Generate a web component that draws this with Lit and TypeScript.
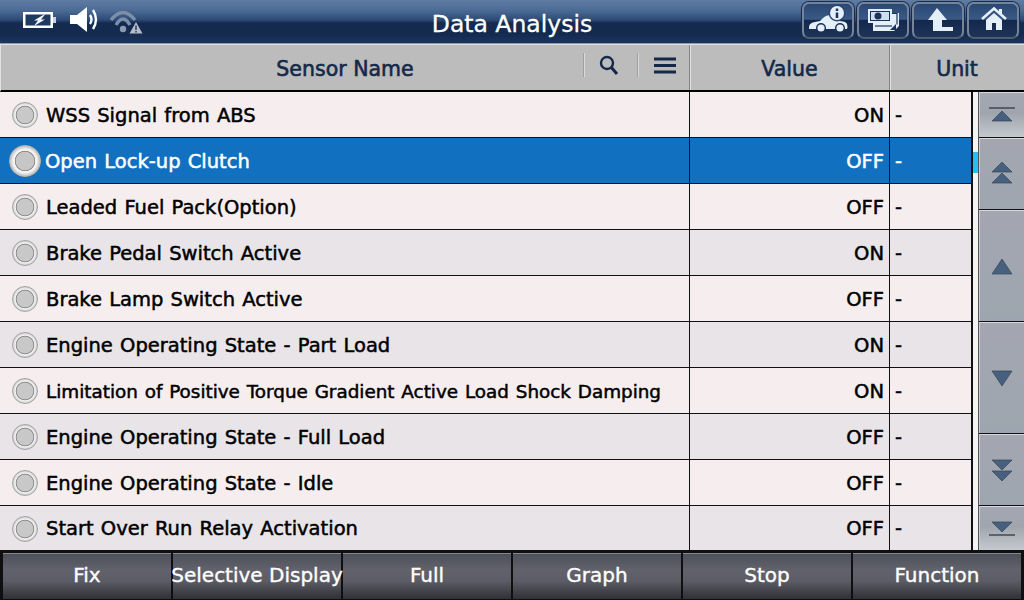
import { LitElement, html, css, svg } from "lit";
import { customElement } from "lit/decorators.js";

type Row = { name: string; value: string; alt?: boolean; selected?: boolean; tight?: boolean };

const rows: Row[] = [
  { name: "WSS Signal from ABS", value: "ON" },
  { name: "Open Lock-up Clutch", value: "OFF", selected: true },
  { name: "Leaded Fuel Pack(Option)", value: "OFF" },
  { name: "Brake Pedal Switch Active", value: "ON", alt: true },
  { name: "Brake Lamp Switch Active", value: "OFF" },
  { name: "Engine Operating State - Part Load", value: "ON", alt: true },
  { name: "Limitation of Positive Torque Gradient Active Load Shock Damping", value: "ON", tight: true },
  { name: "Engine Operating State - Full Load", value: "OFF", alt: true },
  { name: "Engine Operating State - Idle", value: "OFF" },
  { name: "Start Over Run Relay Activation", value: "OFF", alt: true },
];

const footer = ["Fix", "Selective Display", "Full", "Graph", "Stop", "Function"];

// triangle with its base on y, pointing up or down
const tri = (y: number, h: number, up: boolean) => svg`
  <path d="M3 ${y}l10 ${up ? -h : h}l10 ${up ? h : -h}z" fill="#47607f" stroke="#3b4350" stroke-width=".7"/>`;

const scrollButtons = [
  { cls: "b1", h: 16, icon: svg`<path d="M0 1h26" stroke="#38404e" stroke-width="1.4"/>${tri(14, 10, true)}` },
  { cls: "b2 up", h: 23, icon: svg`${tri(11, 10, true)}${tri(22, 10, true)}` },
  { cls: "b3", h: 17, icon: svg`${tri(16, 15, true)}` },
  { cls: "b3", h: 17, icon: svg`${tri(1, 15, false)}` },
  { cls: "b2", h: 23, icon: svg`${tri(1, 10, false)}${tri(12, 10, false)}` },
  { cls: "b1", h: 16, icon: svg`${tri(1, 10, false)}<path d="M0 14h26" stroke="#38404e" stroke-width="1.4"/>` },
];

@customElement("app-root")
export class AppRoot extends LitElement {
  static styles = css`
    :host {
      display: flex;
      flex-direction: column;
      width: 1024px;
      height: 600px;
      overflow: hidden;
      background: #000;
      font-family: "DejaVu Sans", sans-serif;
    }
    .topbar {
      height: 44px;
      flex: none;
      display: grid;
      grid-template-columns: 1fr 1fr 1fr;
      align-items: center;
      box-sizing: border-box;
      border-bottom: 1px solid #8d99ab;
      background: linear-gradient(#5f7da3 0, #4c6c96 10px, #2c4a75 20px, #142a4e 23px, #142a4e 34px, #1c3560 43px);
    }
    .status {
      display: flex;
      align-items: center;
      padding: 0 0 4px 23px;
    }
    .status .speaker {
      margin-left: 13px;
    }
    .status .wifi {
      margin: 5px 0 0 12px;
    }
    .title {
      justify-self: center;
      color: #fff;
      font-size: 23.5px;
      -webkit-text-stroke: 0.3px #fff;
      padding-top: 4px;
      white-space: nowrap;
    }
    .tools {
      display: flex;
      justify-content: flex-end;
      gap: 3px;
      padding: 0 5px 3px 0;
    }
    .tool {
      width: 52px;
      height: 37px;
      box-sizing: border-box;
      border: 2px solid #75849a;
      border-bottom-color: #4e5d72;
      border-radius: 7px;
      background: linear-gradient(#2a4873, #3a5985 46%, #14284b 50%, #1d3459);
      box-shadow: 0 0 0 1px #1a2c4a;
      display: flex;
      align-items: center;
      justify-content: center;
    }
    .head {
      height: 48px;
      flex: none;
      box-sizing: border-box;
      display: grid;
      grid-template-columns: 688px 200px 135px;
      background: #bcbcbc;
      border-top: 1px solid #e2e2e2;
      border-left: 1px solid #e2e2e2;
      border-bottom: 2px solid #000;
      color: #14294a;
      font-size: 20.5px;
      -webkit-text-stroke: 0.6px #14294a;
    }
    .hcell {
      display: flex;
      align-items: center;
      justify-content: center;
      border-left: 1px solid #838383;
      box-shadow: inset 1px 0 0 #e2e2e2;
      padding-top: 3px;
    }
    .hcell.first {
      border-left: none;
      box-shadow: none;
      padding: 0;
    }
    .hname {
      flex: 1;
      text-align: center;
      padding: 3px 0 0 106px;
    }
    .tools-head {
      display: flex;
      align-items: center;
      margin-bottom: 5px;
    }
    .htool {
      width: 54px;
      height: 24px;
      border-left: 1px solid #a0a0a0;
      box-shadow: inset 1px 0 0 #dadada;
      display: flex;
      align-items: center;
      justify-content: center;
      box-sizing: border-box;
    }
    .htool svg {
      margin-right: 4px;
    }
    .htool.menu {
      width: 52px;
    }
    .htool.menu svg {
      margin: 0 0 0 2px;
    }
    .main {
      flex: 1;
      min-height: 0;
      display: flex;
    }
    .table {
      width: 973px;
      flex: none;
      display: flex;
      flex-direction: column;
    }
    .row {
      height: 46px;
      flex: none;
      display: grid;
      grid-template-columns: 690px 200px 83px;
      box-sizing: border-box;
      border-bottom: 1px solid #111;
      background: #f6eeee;
      color: #000;
      font-size: 19.5px;
      word-spacing: 1px;
      -webkit-text-stroke: 0.5px currentColor;
    }
    .row:last-child {
      height: 44px;
      border-bottom: none;
    }
    .row.alt {
      background: #e8e4e8;
    }
    .row.selected {
      background: #1170c0;
      color: #fff;
    }
    .cell {
      display: flex;
      align-items: center;
      box-sizing: border-box;
      border-right: 1px solid #111;
      white-space: nowrap;
      padding-top: 1px;
    }
    .cell.name {
      padding-left: 12px;
      gap: 8px;
    }
    .cell.tight {
      font-size: 18.35px;
    }
    .cell.value {
      justify-content: flex-end;
      padding-right: 5px;
    }
    .cell.unit {
      padding-left: 5px;
      border-right-width: 2px;
    }
    .radio {
      width: 26px;
      height: 26px;
      flex: none;
      box-sizing: border-box;
      border-radius: 50%;
      border: 1px solid #a4a4a4;
      background: radial-gradient(circle at 50% 50%, #c8c8c8 0 8px, #8f8f8f 8.6px 9px, #efefef 9.6px 10px, #cfcfcf 12px);
    }
    .selected .radio {
      width: 32px;
      height: 32px;
      margin: 0 -4px 0 -3px;
      border: none;
      background: radial-gradient(circle at 50% 50%, #c6c6c6 0 9px, #8f8f8f 9.5px 10px, #f2f2f2 10.5px 12px, #b4b4b4 15.5px, #8a8a8a 16px);
    }
    .track {
      width: 5px;
      flex: none;
      box-sizing: border-box;
      background: #f4f4f4;
      padding-top: 60px;
    }
    .thumb {
      height: 21px;
      background: #22c0fa;
    }
    .scroll {
      width: 46px;
      flex: none;
      box-sizing: border-box;
      display: flex;
      flex-direction: column;
      gap: 1px;
      background: #111;
      border-left: 1px solid #555;
    }
    .sbtn {
      box-sizing: border-box;
      border-top: 1px solid #d4d7dc;
      border-left: 1px solid #c8ccd2;
      display: flex;
      align-items: center;
      justify-content: center;
      background: linear-gradient(#a4a6b2, #9da6ae);
    }
    .sbtn.b1 {
      height: 45px;
      background: linear-gradient(#a5a7b3, #9fa5ad 45%, #c5c9cf);
    }
    .sbtn.b1:last-child {
      height: 44px;
    }
    .sbtn.b2 {
      height: 71px;
    }
    .sbtn.up {
      padding-bottom: 4px;
    }
    .sbtn.b3 {
      height: 111px;
    }
    .footer {
      height: 50px;
      flex: none;
      box-sizing: border-box;
      display: grid;
      grid-template-columns: repeat(6, 168px);
      gap: 2px;
      padding: 3px 0 1px 3px;
      background: #0f0f11;
    }
    .fbtn {
      box-sizing: border-box;
      border-top: 1px solid #85878d;
      background: linear-gradient(#4e5059, #61626c 35%, #5b5c65 60%, #303136);
      color: #fff;
      font-size: 20px;
      -webkit-text-stroke: 0.35px #fff;
      padding-bottom: 3px;
      display: flex;
      align-items: center;
      justify-content: center;
      white-space: nowrap;
    }
  `;

  render() {
    return html`
      <div class="topbar">
        <div class="status">
          <svg width="34" height="16" viewBox="0 0 34 16">
            <rect x="0" y="0" width="30" height="16" fill="#fff" />
            <rect x="2.500" y="2.500" width="25" height="11" fill="#1f3a60" />
            <rect x="30" y="5" width="3" height="6" fill="#c8d0da" />
            <path d="M21 2.500l-10 6h4l-4 5.500l11-6.500h-4l4-5z" fill="#f2f6fb" />
          </svg>
          <svg class="speaker" width="28" height="25" viewBox="0 0 28 25">
            <path d="M0 8h7l10-8v25l-10-8h-7z" fill="#fff" />
            <path d="M20 8q3 4.500 0 9M23 3q6 9.500 0 19" stroke="#fff" stroke-width="2.400" fill="none" />
          </svg>
          <svg class="wifi" width="33" height="23" viewBox="0 0 33 23">
            <path d="M1 9q12-15 24 0M6 14q7-12 14 0" stroke="#7b8fa8" stroke-width="3.400" fill="none" />
            <circle cx="13" cy="18" r="3.200" fill="#8a9cb3" />
            <path d="M26 11l6.500 11.500h-13z" fill="#b4bdc9" />
            <path d="M26 14.500v4.500M26 20v1.500" stroke="#1b3358" stroke-width="1.400" />
          </svg>
        </div>
        <div class="title">Data Analysis</div>
        <div class="tools">
          <div class="tool">
            <svg width="48" height="33" viewBox="0 0 48 33">
              <path d="M5 25q-1-6 6-7l5-1q5-6 10-6l8 6q8 0 9 3q1 3 0 5h-3l-4-4l-5 4h-9l-5-4l-5 4z" fill="#e4effa" />
              <circle cx="17" cy="24" r="5" fill="#1b3157" />
              <circle cx="36" cy="24" r="5" fill="#1b3157" />
              <circle cx="17" cy="24" r="3.600" fill="#e4effa" />
              <circle cx="36" cy="24" r="3.600" fill="#e4effa" />
              <circle cx="33" cy="9" r="8.500" fill="#2a4670" />
              <circle cx="33" cy="9" r="7" fill="#e4effa" />
              <path d="M33 4.500v2.500M33 8.500v5.500" stroke="#1c3358" stroke-width="2.500" />
            </svg>
          </div>
          <div class="tool">
            <svg width="48" height="33" viewBox="0 0 48 33">
              <path d="M14 19h19v-10h7v13l-5 5h-21z" fill="#e4effa" />
              <path d="M16 22h17" stroke="#1c3358" stroke-width="1.200" />
              <path d="M33 9.500h5v11" stroke="#1c3358" stroke-width="1.200" fill="none" />
              <rect x="9" y="5" width="24" height="14" fill="#e4effa" />
              <rect x="11.500" y="7.500" width="19" height="9" fill="#cfdeee" stroke="#1c3358" stroke-width="1" />
              <circle cx="19" cy="12" r="3.500" fill="#1c3358" />
              <path d="M31 26l6-6v6z" fill="#1c3358" />
            </svg>
          </div>
          <div class="tool">
            <svg width="48" height="33" viewBox="0 0 48 33">
              <path d="M23 4l10 12h-5v7h11v4h-20v-11h-5z" fill="#e4effa" />
            </svg>
          </div>
          <div class="tool">
            <svg width="48" height="33" viewBox="0 0 48 33">
              <path d="M13 15l12-10.500l12 10.500" stroke="#e4effa" stroke-width="2.600" fill="none" />
              <path d="M30 5h3v6l-3-3z" fill="#e4effa" />
              <path d="M25 9l8 7v10h-6v-7h-4v7h-6v-10z" fill="#e4effa" />
            </svg>
          </div>
        </div>
      </div>

      <div class="head">
        <div class="hcell first">
          <div class="hname">Sensor Name</div>
          <div class="tools-head">
            <div class="htool">
              <svg width="20" height="21" viewBox="0 0 20 21">
                <circle cx="8" cy="8" r="6" fill="none" stroke="#14294a" stroke-width="2.400" />
                <path d="M12 12l6 7" stroke="#14294a" stroke-width="3" />
              </svg>
            </div>
            <div class="htool menu">
              <svg width="22" height="17" viewBox="0 0 22 17">
                <path d="M0 2h22M0 8.500h22M0 15h22" stroke="#14294a" stroke-width="3" />
              </svg>
            </div>
          </div>
        </div>
        <div class="hcell">Value</div>
        <div class="hcell">Unit</div>
      </div>

      <div class="main">
        <div class="table">
          ${rows.map(
            (r) => html`
              <div class="row ${r.alt ? "alt" : ""} ${r.selected ? "selected" : ""}">
                <div class="cell name ${r.tight ? "tight" : ""}"><span class="radio"></span><span>${r.name}</span></div>
                <div class="cell value">${r.value}</div>
                <div class="cell unit">-</div>
              </div>
            `
          )}
        </div>
        <div class="track"><div class="thumb"></div></div>
        <div class="scroll">
          ${scrollButtons.map(
            (b) => html`
              <div class="sbtn ${b.cls}">
                <svg width="26" height="${b.h}" viewBox="0 0 26 ${b.h}">${b.icon}</svg>
              </div>
            `
          )}
        </div>
      </div>

      <div class="footer">
        ${footer.map((f) => html`<div class="fbtn">${f}</div>`)}
      </div>
    `;
  }
}
